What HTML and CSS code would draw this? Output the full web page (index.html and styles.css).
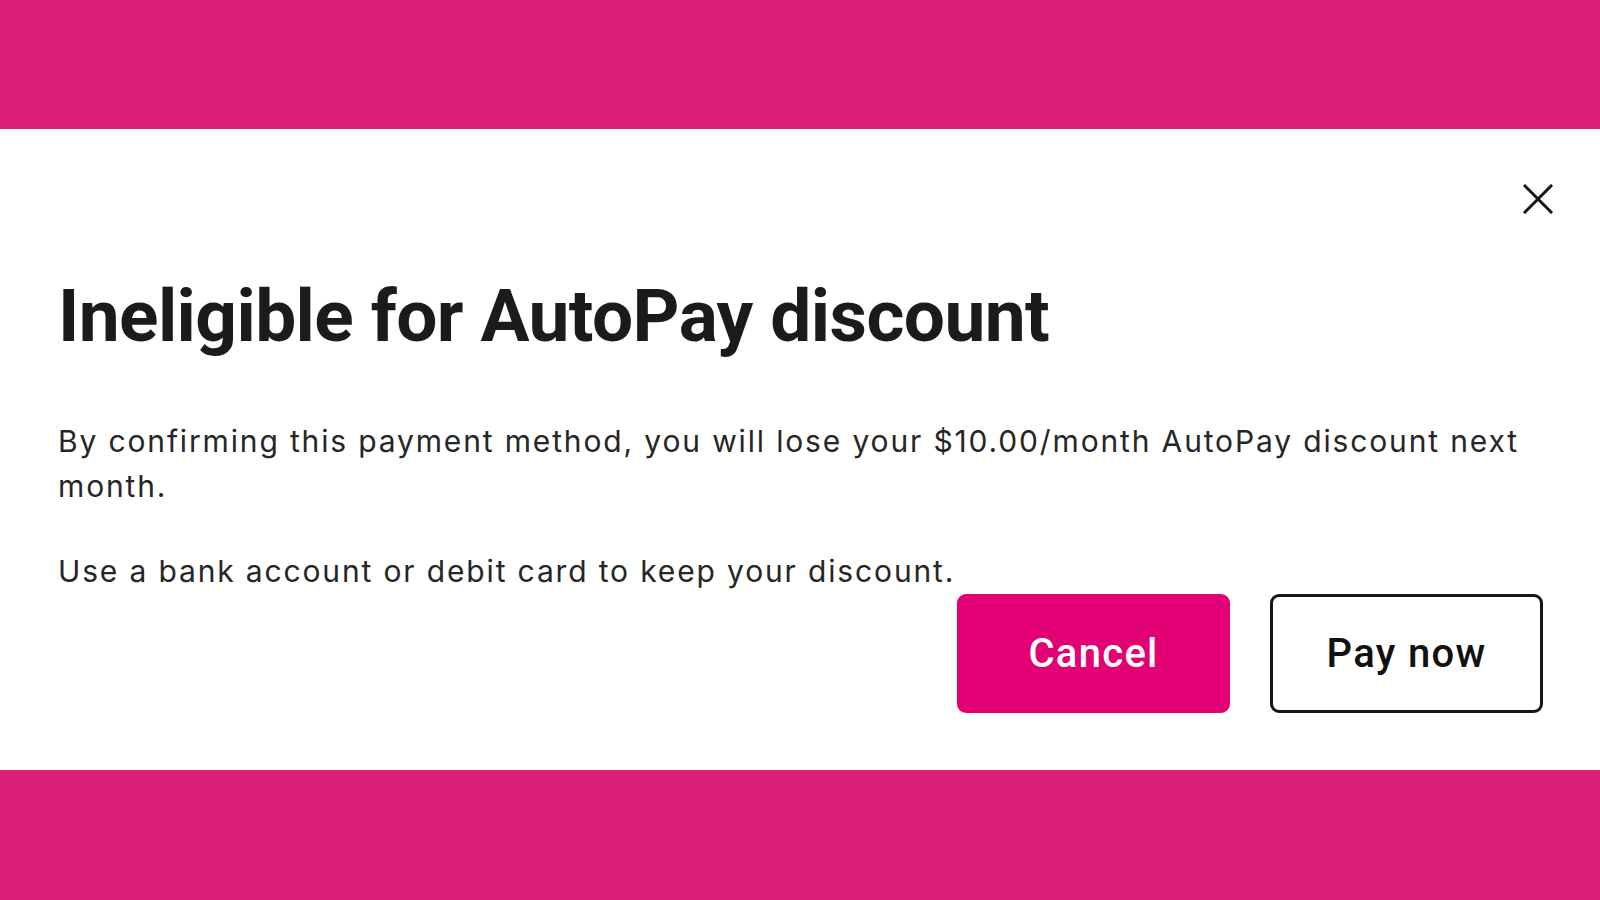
FILE: index.html
```html
<!DOCTYPE html>
<html lang="en">
<head>
<meta charset="utf-8">
<title>Ineligible for AutoPay discount</title>
<link rel="stylesheet" href="styles.css">
</head>
<body>
<div class="band"></div>
<section class="modal">
  <div class="modal-head">
    <button class="close" aria-label="Close">
      <svg viewBox="0 0 30 30" width="30" height="30"><path d="M2 2 L28 28 M28 2 L2 28" stroke="#161616" stroke-width="3" stroke-linecap="square" fill="none"/></svg>
    </button>
  </div>
  <h1 class="title">Ineligible for AutoPay discount</h1>
  <p class="text">By confirming this payment method, you will lose your $10.00/month AutoPay discount next month.</p>
  <p class="text">Use a bank account or debit card to keep your discount.</p>
  <div class="actions">
    <button class="btn btn-primary">Cancel</button>
    <button class="btn btn-outline">Pay now</button>
  </div>
</section>
<div class="band band-bottom"></div>
</body>
</html>
```

FILE: styles.css
```css
html, body {
  margin: 0;
  padding: 0;
  background: #ffffff;
}
body {
  width: 1600px;
  height: 900px;
  overflow: hidden;
  font-family: Inter, "Noto Sans", sans-serif;
  color: #262626;
}
.band {
  height: 129px;
  background: #dc1f77;
}
.band-bottom {
  height: 130px;
}
.modal {
  height: 641px;
  box-sizing: border-box;
  padding: 0 57px 0 58px;
  display: flex;
  flex-direction: column;
}
.modal-head {
  display: flex;
  justify-content: flex-end;
  padding-top: 55px;
  margin-right: -10px;
}
.close {
  width: 30px;
  height: 30px;
  padding: 0;
  border: 0;
  background: none;
  display: flex;
}
.title {
  margin: 62px 0 0 0;
  font-family: Roboto, "Liberation Sans", sans-serif;
  font-weight: 700;
  font-size: 73px;
  line-height: 80px;
  letter-spacing: -0.6px;
  color: #1b1b1b;
}
.text {
  margin: 0;
  font-size: 30px;
  line-height: 45px;
  letter-spacing: 1.85px;
}
.title + .text {
  margin-top: 63px;
}
.text + .text {
  margin-top: 40px;
}
.actions {
  display: flex;
  justify-content: flex-end;
  gap: 40px;
  margin-top: 0;
}
.btn {
  width: 273px;
  height: 119px;
  border-radius: 9px;
  font-family: Roboto, "Liberation Sans", sans-serif;
  font-weight: 500;
  font-size: 40px;
  letter-spacing: 1.3px;
  cursor: pointer;
}
.btn-primary {
  background: #e20074;
  color: #ffffff;
  border: 0;
}
.btn-outline {
  background: #ffffff;
  color: #111111;
  border: 3.5px solid #151515;
}
```
